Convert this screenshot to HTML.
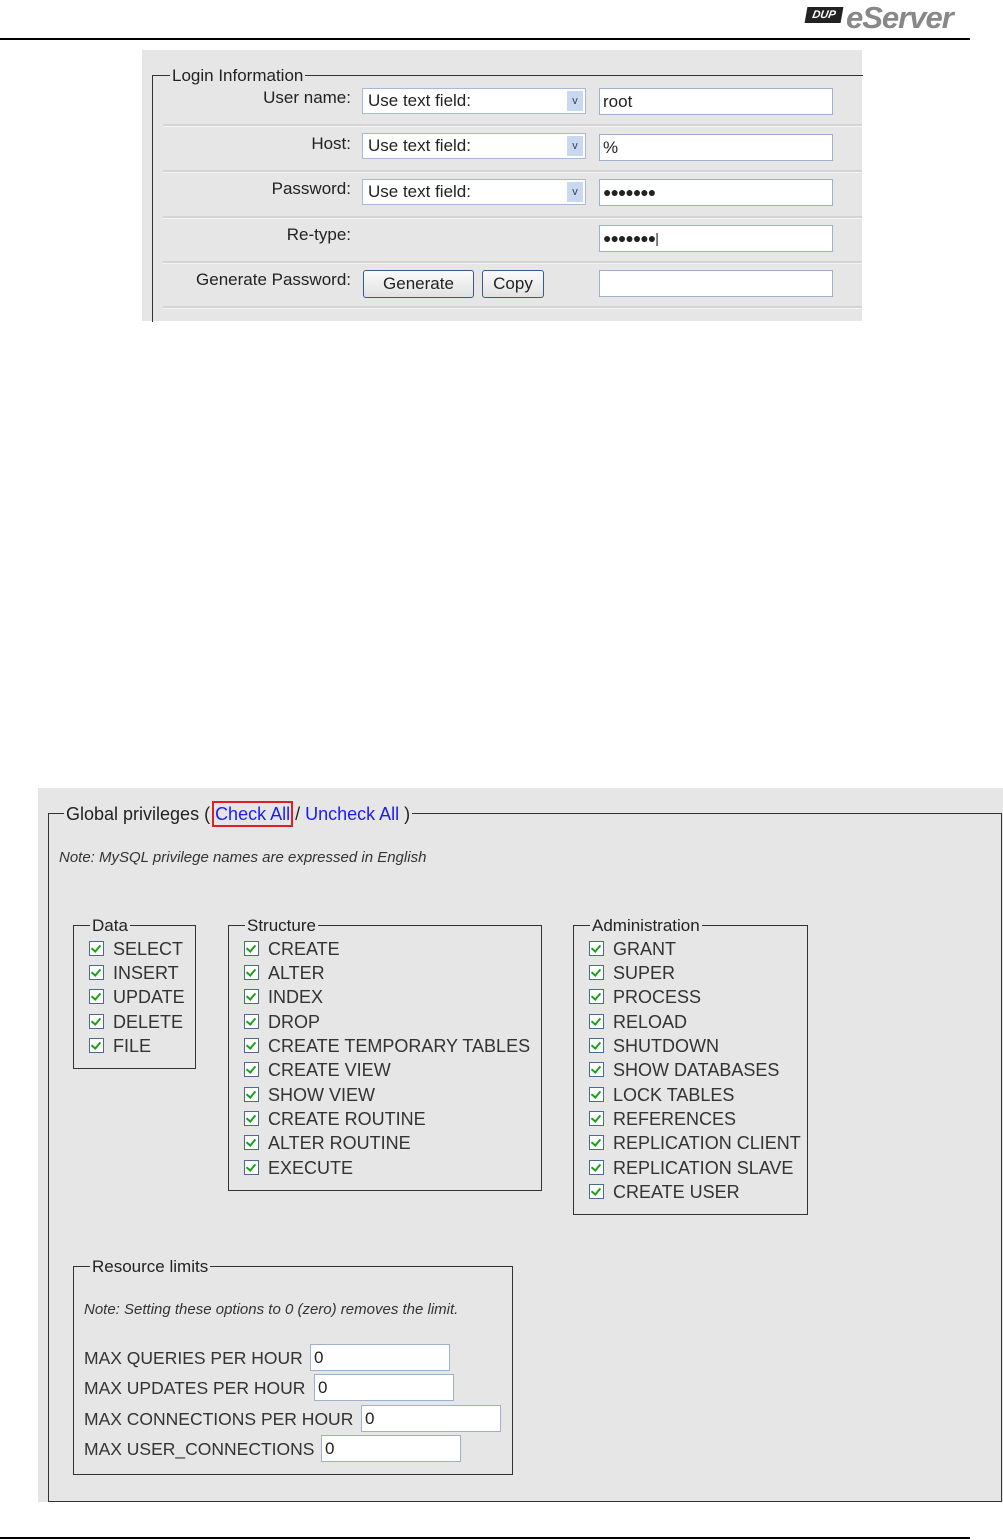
<!DOCTYPE html>
<html><head><meta charset="utf-8"><style>
body{margin:0;width:1003px;height:1540px;background:#fff;position:relative;font-family:"Liberation Sans",Arial,sans-serif;color:#222;overflow:hidden}
.a{position:absolute;white-space:nowrap}
.r{position:absolute;white-space:nowrap;right:652px;font-size:17px}
.hl{position:absolute;height:1px;background:#000}
.sel{position:absolute;height:26px;width:224px;border:1px solid #a7b9d6;background:#fff;box-sizing:border-box;font-size:17px;line-height:24px;padding-left:5px}
.sel i{position:absolute;right:2px;top:2px;width:16px;height:20px;background:#c9d8f0;font-style:normal;font-size:11px;text-align:center;line-height:20px;color:#345}
.inp{position:absolute;height:27px;width:234px;border:1px solid #9fb0cc;background:#fff;box-sizing:border-box;font-size:17px;line-height:25px;padding-left:3px}
.btn{position:absolute;height:28px;border:1px solid #3b5a8a;border-radius:3px;background:linear-gradient(#fafafa,#e2e2e2);box-sizing:border-box;font-size:17px;line-height:26px;text-align:center}
.sep{position:absolute;left:163px;width:699px;height:2px;background:#d4d4d4;border-bottom:1px solid #f5f5f5}
.fs{position:absolute;border:1px solid #333;box-sizing:border-box}
.lg{position:absolute;background:#e6e6e6;padding:0 2px;font-size:17px;line-height:20px;white-space:nowrap}
.it{position:absolute;font-size:18px;line-height:20px;white-space:nowrap;color:#333}
.it b{display:inline-block;width:13px;height:13px;border:1px solid #4a6a8f;background:#fff;vertical-align:-1px;margin-right:9px;position:relative}
.it b:after{content:"";position:absolute;left:3px;top:1px;width:4px;height:7px;border:solid #1aa01a;border-width:0 2px 2px 0;transform:rotate(40deg)}
.ri{position:absolute;height:27px;border:1px solid #9fb0cc;background:#fff;box-sizing:border-box;font-size:17px;line-height:25px;padding-left:3px}
</style></head><body>
<div class="a" style="left:806px;top:7px;width:36px;height:16px;background:#222;color:#fff;font:italic bold 11px 'Liberation Sans';line-height:16px;text-align:center;transform:skewX(-10deg)">DUP</div>
<div class="a" style="left:846px;top:0px;font:italic bold 31px 'Liberation Sans';color:#888;letter-spacing:-1px">eServer</div>
<div class="hl" style="left:0;top:38px;width:970px;height:2px"></div>

<div class="a" style="left:142px;top:50px;width:720px;height:271px;background:#e6e6e6"></div>
<div class="a" style="left:152px;top:75px;width:710px;height:246px;border-left:1px solid #333;border-top:1px solid #333"></div>
<div class="lg" style="left:170px;top:66px">Login Information</div>
<div class="r" style="top:88px">User name:</div>
<div class="r" style="top:134px">Host:</div>
<div class="r" style="top:179px">Password:</div>
<div class="r" style="top:225px">Re-type:</div>
<div class="r" style="top:270px">Generate Password:</div>
<div class="sel" style="left:362px;top:88px">Use text field:<i>v</i></div>
<div class="sel" style="left:362px;top:133px">Use text field:<i>v</i></div>
<div class="sel" style="left:362px;top:179px">Use text field:<i>v</i></div>
<div class="inp" style="left:599px;top:88px">root</div>
<div class="inp" style="left:599px;top:134px">%</div>
<div class="inp" style="left:599px;top:179px;font-size:14px;letter-spacing:-1px">●●●●●●●</div>
<div class="inp" style="left:599px;top:225px;font-size:14px;letter-spacing:-1px">●●●●●●●|</div>
<div class="inp" style="left:599px;top:270px"></div>
<div class="btn" style="left:363px;top:270px;width:111px">Generate</div>
<div class="btn" style="left:482px;top:270px;width:62px">Copy</div>
<div class="sep" style="top:124px"></div><div class="sep" style="top:170px"></div><div class="sep" style="top:216px"></div><div class="sep" style="top:261px"></div><div class="sep" style="top:306px"></div>

<div class="a" style="left:38px;top:788px;width:965px;height:714px;background:#e6e6e6"></div>
<div class="fs" style="left:48px;top:813px;width:954px;height:689px"></div>
<div class="lg" style="left:64px;top:804px;font-size:18px">Global privileges ( <span style="color:#1a1aff;outline:2px solid #e02020;outline-offset:1px">Check All</span> / <span style="color:#1a1aff">Uncheck All</span> )</div>
<div class="a" style="left:59px;top:849px;font-size:15px;font-style:italic;color:#333">Note: MySQL privilege names are expressed in English</div>

<div class="fs" style="left:73px;top:925px;width:123px;height:144px"></div>
<div class="lg" style="left:90px;top:916px">Data</div>
<div class="it" style="left:89px;top:939px"><b></b>SELECT</div>
<div class="it" style="left:89px;top:963px"><b></b>INSERT</div>
<div class="it" style="left:89px;top:987px"><b></b>UPDATE</div>
<div class="it" style="left:89px;top:1012px"><b></b>DELETE</div>
<div class="it" style="left:89px;top:1036px"><b></b>FILE</div>

<div class="fs" style="left:228px;top:925px;width:314px;height:266px"></div>
<div class="lg" style="left:245px;top:916px">Structure</div>
<div class="it" style="left:244px;top:939px"><b></b>CREATE</div>
<div class="it" style="left:244px;top:963px"><b></b>ALTER</div>
<div class="it" style="left:244px;top:987px"><b></b>INDEX</div>
<div class="it" style="left:244px;top:1012px"><b></b>DROP</div>
<div class="it" style="left:244px;top:1036px"><b></b>CREATE TEMPORARY TABLES</div>
<div class="it" style="left:244px;top:1060px"><b></b>CREATE VIEW</div>
<div class="it" style="left:244px;top:1085px"><b></b>SHOW VIEW</div>
<div class="it" style="left:244px;top:1109px"><b></b>CREATE ROUTINE</div>
<div class="it" style="left:244px;top:1133px"><b></b>ALTER ROUTINE</div>
<div class="it" style="left:244px;top:1158px"><b></b>EXECUTE</div>

<div class="fs" style="left:573px;top:925px;width:235px;height:290px"></div>
<div class="lg" style="left:590px;top:916px">Administration</div>
<div class="it" style="left:589px;top:939px"><b></b>GRANT</div>
<div class="it" style="left:589px;top:963px"><b></b>SUPER</div>
<div class="it" style="left:589px;top:987px"><b></b>PROCESS</div>
<div class="it" style="left:589px;top:1012px"><b></b>RELOAD</div>
<div class="it" style="left:589px;top:1036px"><b></b>SHUTDOWN</div>
<div class="it" style="left:589px;top:1060px"><b></b>SHOW DATABASES</div>
<div class="it" style="left:589px;top:1085px"><b></b>LOCK TABLES</div>
<div class="it" style="left:589px;top:1109px"><b></b>REFERENCES</div>
<div class="it" style="left:589px;top:1133px"><b></b>REPLICATION CLIENT</div>
<div class="it" style="left:589px;top:1158px"><b></b>REPLICATION SLAVE</div>
<div class="it" style="left:589px;top:1182px"><b></b>CREATE USER</div>

<div class="fs" style="left:73px;top:1266px;width:440px;height:209px"></div>
<div class="lg" style="left:90px;top:1257px">Resource limits</div>
<div class="a" style="left:84px;top:1301px;font-size:15px;font-style:italic;color:#333">Note: Setting these options to 0 (zero) removes the limit.</div>
<div class="a" style="left:84px;top:1348px;font-size:17.5px;color:#333">MAX QUERIES PER HOUR</div>
<div class="ri" style="left:310px;top:1344px;width:140px">0</div>
<div class="a" style="left:84px;top:1378px;font-size:17.5px;color:#333">MAX UPDATES PER HOUR</div>
<div class="ri" style="left:314px;top:1374px;width:140px">0</div>
<div class="a" style="left:84px;top:1409px;font-size:17.5px;color:#333">MAX CONNECTIONS PER HOUR</div>
<div class="ri" style="left:361px;top:1405px;width:140px">0</div>
<div class="a" style="left:84px;top:1439px;font-size:17.5px;color:#333">MAX USER_CONNECTIONS</div>
<div class="ri" style="left:321px;top:1435px;width:140px">0</div>

<div class="hl" style="left:0;top:1537px;width:970px;height:2px"></div>
</body></html>
